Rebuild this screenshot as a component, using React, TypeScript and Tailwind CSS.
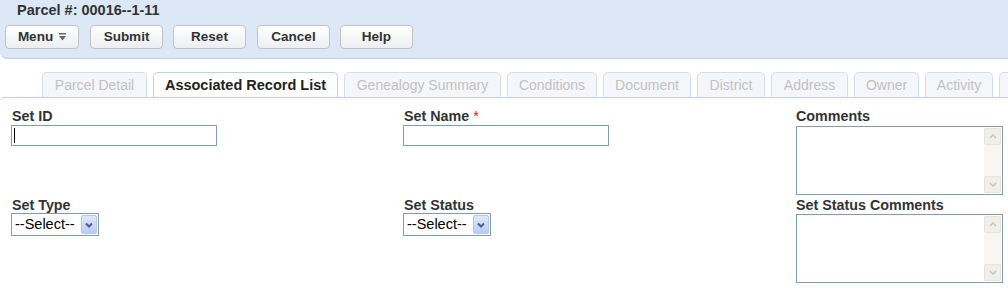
import React from "react";

const font = { fontFamily: '"Liberation Sans", Arial, sans-serif' };

function Btn({ children, w }: { children: React.ReactNode; w: string }) {
  return (
    <div
      className={`${w} h-[24px] flex items-center justify-center rounded-[4px] border border-[#c3c3c3] bg-gradient-to-b from-[#ffffff] to-[#eceef1] text-[13.5px] font-bold text-[#333]`}
    >
      {children}
    </div>
  );
}

function Tab({ label, w, active }: { label: string; w: string; active?: boolean }) {
  if (active) {
    return (
      <div
        className={`${w} h-[26px] -mb-px flex items-center justify-center rounded-t-[5px] border border-b-0 border-[#b9d1ec] bg-white text-[14.5px] font-bold text-[#222]`}
      >
        {label}
      </div>
    );
  }
  return (
    <div
      className={`${w} h-[25px] flex items-center justify-center rounded-t-[5px] border border-b-0 border-[#cde0f3] bg-[#f4f6f9] text-[14px] text-[#c2c2c2] shrink-0`}
    >
      {label}
    </div>
  );
}

function Label({ children }: { children: React.ReactNode }) {
  return <div className="h-[16px] leading-[16px] text-[14.3px] font-bold text-[#333]">{children}</div>;
}

function TextBox({ caret }: { caret?: boolean }) {
  return (
    <div className="w-[206px] h-[21px] border border-[#7f9db9] bg-white flex items-center pl-[2px]">
      {caret && <div className="w-px h-[15px] bg-black" />}
    </div>
  );
}

function SelectBox() {
  return (
    <div className="w-[88px] h-[23px] border border-[#7f9db9] bg-white flex items-center pl-[3px] pr-[1px] text-[14.5px] text-black">
      <span className="flex-1">--Select--</span>
      <div className="w-[16px] h-[19px] rounded-[2px] border border-[#b5c7ef] bg-gradient-to-b from-[#e0e8fb] to-[#b9cbf3] flex items-center justify-center">
        <svg width="8" height="6" viewBox="0 0 8 6">
          <path d="M1 1.5 L4 4.5 L7 1.5" stroke="#4d6185" strokeWidth="2" fill="none" />
        </svg>
      </div>
    </div>
  );
}

function TextArea() {
  return (
    <div className="w-[207px] h-[69px] border border-[#7f9db9] bg-white flex justify-end p-px">
      <div className="w-[17px] h-full bg-[#f7f6f1] flex flex-col justify-between">
        <div className="h-[17px] rounded-[2px] border border-[#e6e4dc] bg-[#f0efe8] flex items-center justify-center">
          <svg width="8" height="5" viewBox="0 0 8 5">
            <path d="M1 4 L4 1 L7 4" stroke="#c9c7bd" strokeWidth="1.6" fill="none" />
          </svg>
        </div>
        <div className="h-[17px] rounded-[2px] border border-[#e6e4dc] bg-[#f0efe8] flex items-center justify-center">
          <svg width="8" height="5" viewBox="0 0 8 5">
            <path d="M1 1 L4 4 L7 1" stroke="#c9c7bd" strokeWidth="1.6" fill="none" />
          </svg>
        </div>
      </div>
    </div>
  );
}

export default function App() {
  return (
    <div style={font} className="w-[1008px] h-[290px] bg-white overflow-hidden">
      <div className="h-[59px] bg-[#dce8f6] border-b border-[#b8cfe9] rounded-bl-[8px]">
        <div className="pl-[17px] pt-[2px] h-[25px] text-[14.5px] leading-[17px] font-bold text-[#333]">Parcel #: 00016--1-11</div>
        <div className="flex pl-[5px]">
          <Btn w="w-[74px]">
            <span>Menu</span>
            <svg className="ml-[6px]" width="7" height="8" viewBox="0 0 7 8">
              <rect x="0" y="0" width="7" height="1.5" fill="#666" />
              <path d="M0 3 L7 3 L3.5 7.5 Z" fill="#666" />
            </svg>
          </Btn>
          <div className="w-[11px]" />
          <Btn w="w-[73px]">Submit</Btn>
          <div className="w-[10px]" />
          <Btn w="w-[73px]">Reset</Btn>
          <div className="w-[11px]" />
          <Btn w="w-[73px]">Cancel</Btn>
          <div className="w-[10px]" />
          <Btn w="w-[73px]">Help</Btn>
        </div>
      </div>
      <div className="mt-[13px] flex items-end gap-[6px] pl-[42px] overflow-hidden">
        <Tab label="Parcel Detail" w="w-[105px]" />
        <Tab label="Associated Record List" w="w-[185px] shrink-0" active />
        <Tab label="Genealogy Summary" w="w-[157px]" />
        <Tab label="Conditions" w="w-[90px]" />
        <Tab label="Document" w="w-[88px]" />
        <Tab label="District" w="w-[68px]" />
        <Tab label="Address" w="w-[77px]" />
        <Tab label="Owner" w="w-[65px]" />
        <Tab label="Activity" w="w-[68px]" />
        <Tab label="" w="w-[80px]" />
      </div>
      <div className="border-t border-[#b9d1ec] rounded-tl-[4px] h-[200px] pl-[12px] pt-[10px]">
        <div className="grid grid-cols-[392px_392px_1fr] grid-rows-[89px_auto]">
          <div>
            <Label>Set ID</Label>
            <div className="mt-[1px] -ml-px">
              <TextBox caret />
            </div>
          </div>
          <div>
            <Label>
              Set Name <span className="text-[#e02020] font-normal">*</span>
            </Label>
            <div className="mt-[1px] -ml-px">
              <TextBox />
            </div>
          </div>
          <div>
            <Label>Comments</Label>
            <div className="mt-[2px]">
              <TextArea />
            </div>
          </div>
          <div>
            <Label>Set Type</Label>
            <div className="-ml-px">
              <SelectBox />
            </div>
          </div>
          <div>
            <Label>Set Status</Label>
            <div className="-ml-px">
              <SelectBox />
            </div>
          </div>
          <div>
            <Label>Set Status Comments</Label>
            <div className="mt-[1px]">
              <TextArea />
            </div>
          </div>
        </div>
      </div>
    </div>
  );
}
